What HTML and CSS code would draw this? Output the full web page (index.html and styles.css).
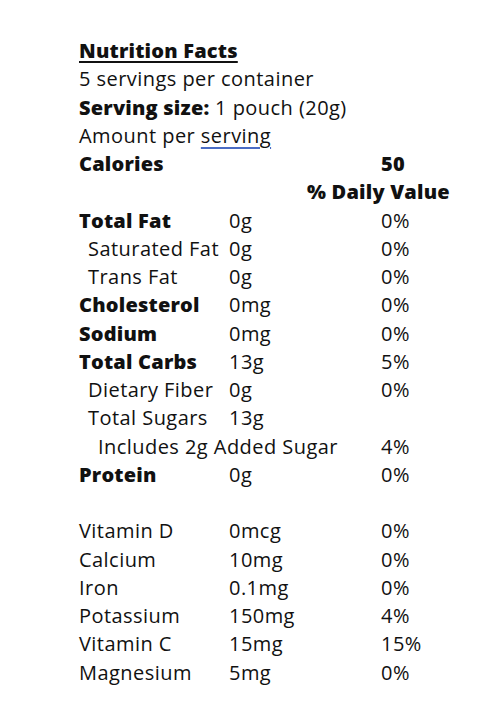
FILE: index.html
```html
<!DOCTYPE html>
<html>
<head>
<meta charset="utf-8">
<link rel="stylesheet" href="styles.css">
</head>
<body>
<div class="label">
  <div class="line title">Nutrition Facts</div>
  <div class="line">5 servings per container</div>
  <div class="line"><b>Serving size:</b> 1 pouch (20g)</div>
  <div class="line">Amount per <span class="spell">serving</span></div>
  <div class="grid">
    <div class="name b">Calories</div><div></div><div class="dv b">50</div>
    <div class="dvhead b">% Daily Value</div>

    <div class="name b">Total Fat</div><div>0g</div><div class="dv">0%</div>
    <div class="name i1">Saturated Fat</div><div>0g</div><div class="dv">0%</div>
    <div class="name i1">Trans Fat</div><div>0g</div><div class="dv">0%</div>
    <div class="name b">Cholesterol</div><div>0mg</div><div class="dv">0%</div>
    <div class="name b">Sodium</div><div>0mg</div><div class="dv">0%</div>
    <div class="name b">Total Carbs</div><div>13g</div><div class="dv">5%</div>
    <div class="name i1">Dietary Fiber</div><div>0g</div><div class="dv">0%</div>
    <div class="name i1">Total Sugars</div><div>13g</div><div class="dv"></div>
    <div class="name i2 span2">Includes 2g Added Sugar</div><div class="dv">4%</div>
    <div class="name b">Protein</div><div>0g</div><div class="dv">0%</div>
    <div class="blank"></div>
    <div class="name">Vitamin D</div><div>0mcg</div><div class="dv">0%</div>
    <div class="name">Calcium</div><div>10mg</div><div class="dv">0%</div>
    <div class="name">Iron</div><div>0.1mg</div><div class="dv">0%</div>
    <div class="name">Potassium</div><div>150mg</div><div class="dv">4%</div>
    <div class="name">Vitamin C</div><div>15mg</div><div class="dv">15%</div>
    <div class="name">Magnesium</div><div>5mg</div><div class="dv">0%</div>
  </div>
</div>
</body>
</html>
```
FILE: styles.css
```css
html, body {
  margin: 0;
  padding: 0;
  background: #ffffff;
}
body {
  font-family: "Open Sans", "Liberation Sans", sans-serif;
  font-size: 20px;
  letter-spacing: 0.45px;
  line-height: 28.25px;
  color: #111111;
}
.label {
  padding: 37px 0 0 79px;
}
.line {
  white-space: nowrap;
}
.title {
  font-weight: 800;
  letter-spacing: 0.2px;
  text-decoration: underline;
  text-decoration-thickness: 1.5px;
  text-underline-offset: 3px;
}
b, .b {
  font-weight: 800;
  letter-spacing: 0.2px;
}
.spell {
  text-decoration: underline;
  text-decoration-color: #4a6cc4;
  text-decoration-thickness: 2px;
  text-underline-offset: 4px;
}
.grid {
  display: grid;
  grid-template-columns: 150px 152px 120px;
  white-space: nowrap;
}
.grid > div {
  min-height: 28.25px;
}
.i1 {
  padding-left: 9px;
}
.i2 {
  padding-left: 19px;
}
.span2 {
  grid-column: span 2;
}
.dvhead {
  grid-column: 1 / -1;
  padding-left: 228px;
}
.blank {
  grid-column: 1 / -1;
}
```
